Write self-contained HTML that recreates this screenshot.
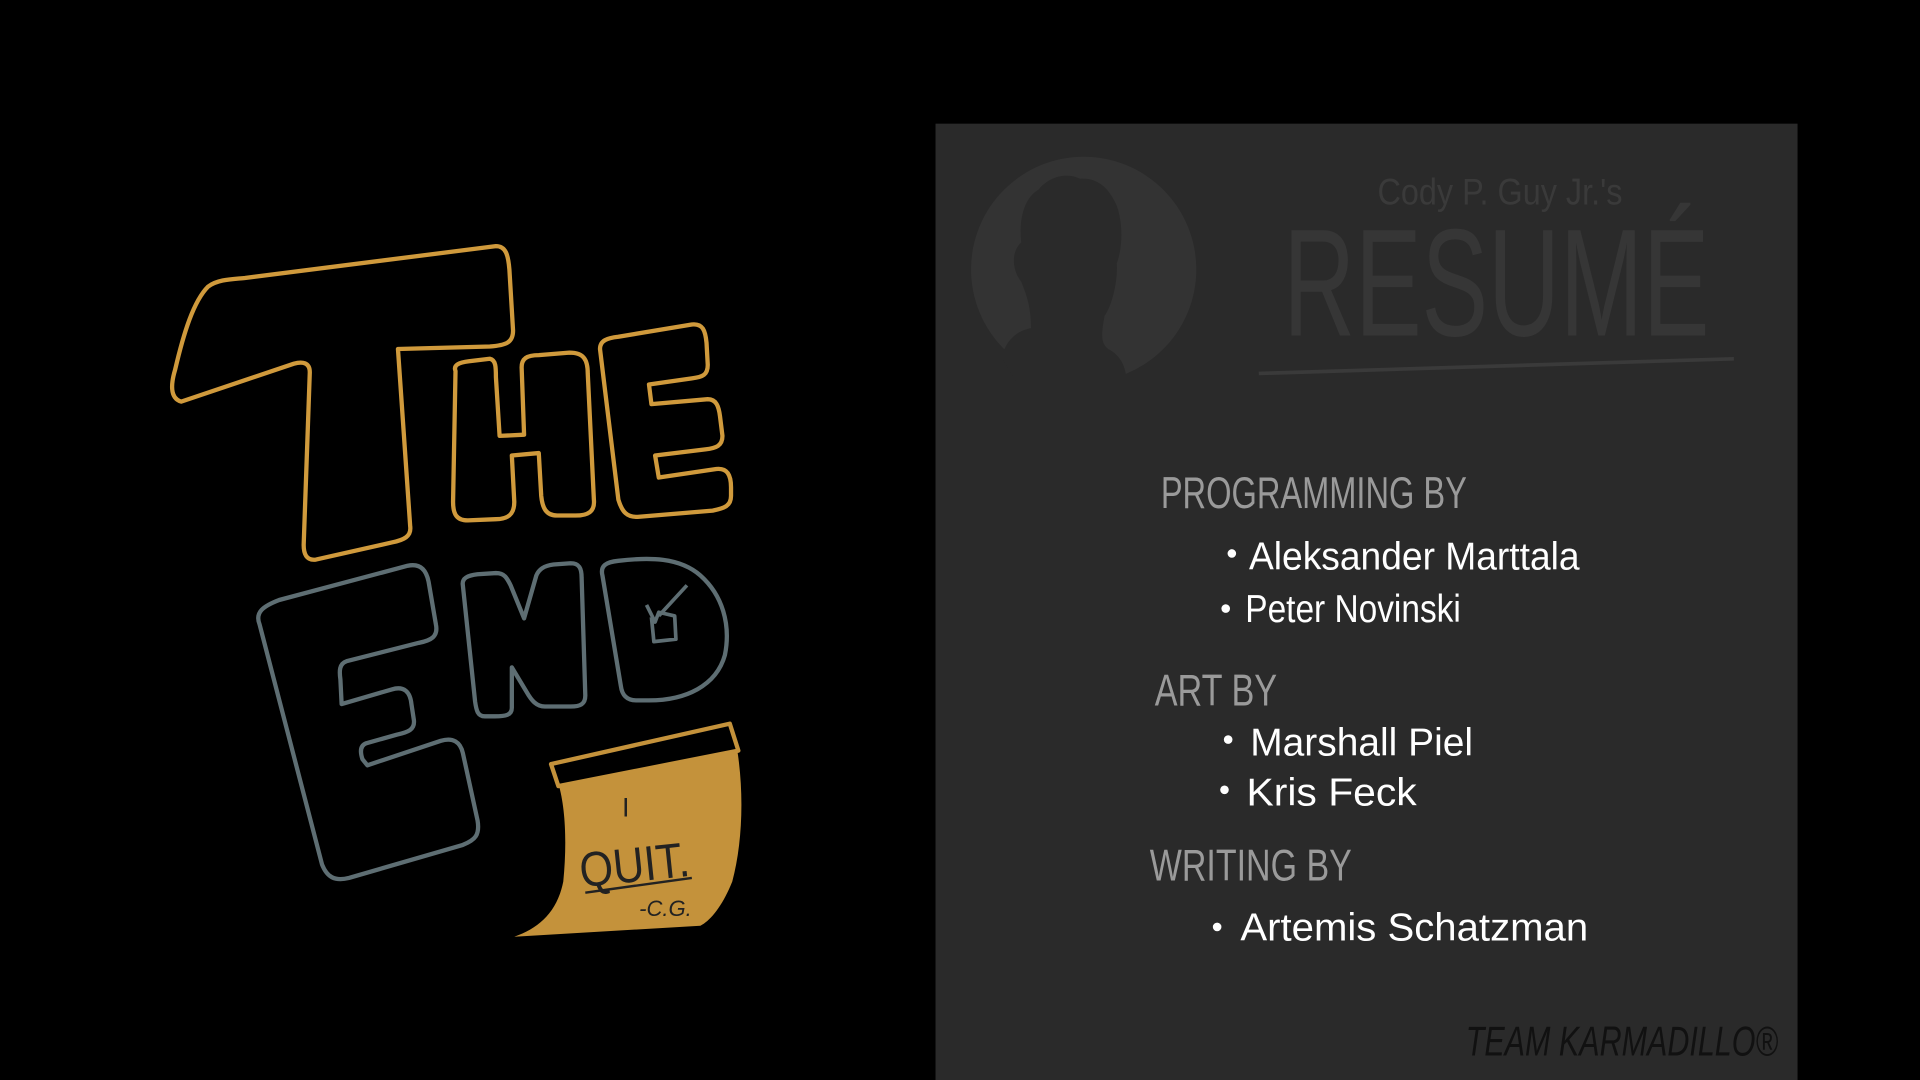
<!DOCTYPE html>
<html><head><meta charset="utf-8"><style>
html,body{margin:0;padding:0;background:#000;width:1920px;height:1080px;overflow:hidden}
svg{display:block}
text{font-family:"Liberation Sans",sans-serif}
</style></head><body>
<svg width="1920" height="1080" viewBox="0 0 1568 882" xmlns="http://www.w3.org/2000/svg">
<rect width="1568" height="882" fill="#000"/>
<rect x="764" y="101" width="704" height="781" fill="#2a2a2a"/>
<circle cx="885" cy="220" r="92" fill="#333"/>
<path d="M818 292 C822 276 832 270 842 268 C842 250 838 240 834 230 C826 220 826 205 834 198 C832 180 836 162 848 155 C856 145 870 140 882 146 C895 145 905 152 912 168 C918 185 916 205 912 215 C913 230 908 250 902 258 C900 270 898 280 905 285 C915 290 920 300 920 312 L830 312 Z" fill="#2a2a2a"/>
<text x="1125" y="167" font-size="30" fill="#3a3a3a" textLength="200" lengthAdjust="spacingAndGlyphs">Cody P. Guy Jr.'s</text>
<text x="1048" y="274" font-size="125" fill="#363636" textLength="348" lengthAdjust="spacingAndGlyphs">RESUMÉ</text>
<path d="M1028 305 L1416 293" stroke="#3a3a3a" stroke-width="3" fill="none"/>
<g fill="#9a9a9a">
<text x="948" y="415" font-size="36" textLength="250" lengthAdjust="spacingAndGlyphs">PROGRAMMING BY</text>
<text x="943" y="576" font-size="36" textLength="100" lengthAdjust="spacingAndGlyphs">ART BY</text>
<text x="939" y="719" font-size="36" textLength="165" lengthAdjust="spacingAndGlyphs">WRITING BY</text>
</g>
<g fill="#fff">
<circle cx="1006" cy="452" r="3.5"/><circle cx="1001" cy="497" r="3.5"/>
<circle cx="1003" cy="604" r="3.5"/><circle cx="1000" cy="645" r="3.5"/>
<circle cx="994" cy="757" r="3.5"/>
<text x="1020" y="465" font-size="32" textLength="270" lengthAdjust="spacingAndGlyphs">Aleksander Marttala</text>
<text x="1017" y="508" font-size="32" textLength="176" lengthAdjust="spacingAndGlyphs">Peter Novinski</text>
<text x="1021" y="617" font-size="32" textLength="182" lengthAdjust="spacingAndGlyphs">Marshall Piel</text>
<text x="1018" y="658" font-size="32" textLength="139" lengthAdjust="spacingAndGlyphs">Kris Feck</text>
<text x="1013" y="768" font-size="32" textLength="284" lengthAdjust="spacingAndGlyphs">Artemis Schatzman</text>
</g>
<text x="1197" y="862" font-size="34" font-style="italic" fill="#111" textLength="255" lengthAdjust="spacingAndGlyphs">TEAM KARMADILLO®</text>
<g fill="none" stroke="#d09a3c" stroke-width="3.5" stroke-linejoin="round">
<path d="M148 328 C138 325 140 312 143 302 C150 272 158 246 170 234 C178 228 190 228 200 227 L405 201 C413 201 415 208 416 220 L419 270 C419 280 413 282 400 283 L325 285 L335 430 C336 438 330 441 320 443 L258 457 C250 458 248 452 248 445 L253 304 C253 296 247 295 240 297 Z"/>
<path d="M372 303 C370 298 375 296 383 295 L400 293 C405 294 405 300 405 308 L408 356 L428 355 L426 300 C426 293 430 290 440 290 L465 288 C477 288 480 294 480 305 L485 408 C486 418 480 421 470 421 L455 421 C446 421 443 415 442 405 L440 370 L418 372 L420 410 C420 420 415 424 405 424 L382 425 C373 425 370 420 370 410 Z"/>
<path d="M490 285 C490 278 496 276 505 275 L565 265 C574 264 576 270 577 280 L578 298 C578 306 574 308 565 309 L530 314 L532 330 L578 326 C585 326 587 332 588 340 L590 356 C590 364 585 366 576 367 L535 372 L538 390 L585 383 C594 382 597 388 597 398 L597 405 C597 413 592 415 582 417 L522 422 C512 423 508 418 505 408 Z"/>
</g>
<g fill="none" stroke="#5e6e73" stroke-width="3.5" stroke-linejoin="round">
<path d="M212 510 C208 500 215 495 228 490 L333 462 C343 460 348 465 350 475 L356 510 C358 520 352 523 342 525 L283 540 C277 542 277 548 278 555 L279 575 L320 563 C330 560 335 565 336 575 L338 588 C339 596 333 598 324 600 L299 607 C294 609 294 614 296 620 L300 625 L360 605 C370 602 376 606 378 615 L390 670 C392 682 388 686 378 690 L285 717 C273 720 267 716 263 706 Z"/>
<path d="M378 478 C377 472 382 470 390 469 L405 468 C412 468 414 472 417 478 L428 505 L438 470 C440 465 444 462 452 461 L466 460 C473 460 475 464 475 472 L478 568 C478 575 474 577 466 577 L445 577 C438 577 434 572 430 565 L418 545 L418 578 C418 584 413 585 404 585 L396 585 C390 585 389 580 388 573 Z"/>
<path d="M492 470 C490 462 495 459 505 458 C530 455 555 455 572 470 C590 486 597 510 592 535 C585 560 560 572 530 572 L520 572 C512 572 508 568 507 560 Z"/>
<path d="M528 494 L535 508 L538 500 L551 503 L552 522 L534 524 L532 504 M538 503 L561 478" stroke-width="3"/>
</g>
<path d="M456 640 L602 612 C608 650 606 690 598 720 C590 740 580 752 572 756 L420 765 C440 758 455 745 460 720 C463 690 462 660 456 640 Z" fill="#c4923b"/>
<path d="M450 624 L596 591 L603 613 L456 642 Z" fill="#000" stroke="#c4923b" stroke-width="3.5" stroke-linejoin="round"/>
<g fill="#222">
<text x="508" y="667" font-size="22">I</text>
<text x="473" y="720" font-size="40" textLength="90" lengthAdjust="spacingAndGlyphs" transform="rotate(-6 518 705)">QUIT.</text>
<text x="522" y="748" font-size="18" font-style="italic">-C.G.</text>
</g>
<path d="M478 729 L565 717" stroke="#222" stroke-width="2"/>
</svg>
</body></html>
